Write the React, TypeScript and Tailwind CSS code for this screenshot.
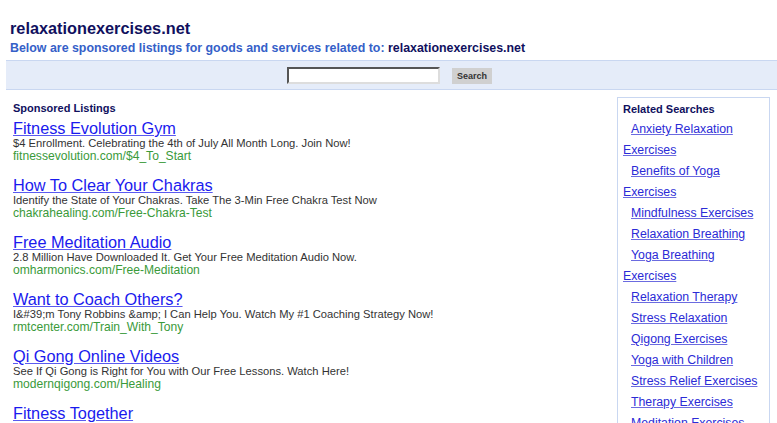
import React from "react";

const listings = [
  {
    t: "Fitness Evolution Gym",
    d: "$4 Enrollment. Celebrating the 4th of July All Month Long. Join Now!",
    u: "fitnessevolution.com/$4_To_Start",
  },
  {
    t: "How To Clear Your Chakras",
    d: "Identify the State of Your Chakras. Take The 3-Min Free Chakra Test Now",
    u: "chakrahealing.com/Free-Chakra-Test",
  },
  {
    t: "Free Meditation Audio",
    d: "2.8 Million Have Downloaded It. Get Your Free Meditation Audio Now.",
    u: "omharmonics.com/Free-Meditation",
  },
  {
    t: "Want to Coach Others?",
    d: "I&#39;m Tony Robbins &amp; I Can Help You. Watch My #1 Coaching Strategy Now!",
    u: "rmtcenter.com/Train_With_Tony",
  },
  {
    t: "Qi Gong Online Videos",
    d: "See If Qi Gong is Right for You with Our Free Lessons. Watch Here!",
    u: "modernqigong.com/Healing",
  },
  {
    t: "Fitness Together",
    d: "Personal Training in a Private Suite. Get Results Fast. Free Session!",
    u: "fitnesstogether.com",
  },
];

const related = [
  "Anxiety Relaxation Exercises",
  "Benefits of Yoga Exercises",
  "Mindfulness Exercises",
  "Relaxation Breathing",
  "Yoga Breathing Exercises",
  "Relaxation Therapy",
  "Stress Relaxation",
  "Qigong Exercises",
  "Yoga with Children",
  "Stress Relief Exercises",
  "Therapy Exercises",
  "Meditation Exercises",
];

export default function App() {
  return (
    <div className="h-[423px] w-[777px] overflow-hidden bg-white font-['Liberation_Sans',Arial,sans-serif]">
      <div className="pl-[10px] pt-[19px]">
        <h1 className="text-[16.3px] font-bold leading-[18px] text-[#10105e]">relaxationexercises.net</h1>
        <p className="mt-[4px] text-[12.4px] font-bold leading-[14px] text-[#3560c8]">
          Below are sponsored listings for goods and services related to:{" "}
          <span className="text-[#10105e]">relaxationexercises.net</span>
        </p>
      </div>
      <div className="ml-[6px] mt-[5px] flex h-[30px] items-center justify-center gap-[12px] border-y border-[#c9d7f1] bg-[#e5ecf9] pr-[4px]">
        <input
          type="text"
          className="h-[17px] w-[153px] border-2 border-t-[#555] border-l-[#555] border-b-[#ddd] border-r-[#ddd] bg-white outline-none"
        />
        <button className="mt-[2px] h-[16px] w-[40px] bg-[#d0d0d0] text-[9px] font-bold leading-[16px] text-[#333]">
          Search
        </button>
      </div>
      <div className="mt-[7px] flex">
        <div className="flex-1 pl-[13px] pt-[5px]">
          <div className="text-[11px] font-bold leading-[13px] text-[#10105e]">Sponsored Listings</div>
          <div className="mt-[4px]">
            {listings.map((l) => (
              <div key={l.t} className="mb-[13px]">
                <a className="block w-fit text-[16.3px] leading-[18px] text-[#1a1aee] underline decoration-[#5a5af0] underline-offset-[1px]">
                  {l.t}
                </a>
                <div className="text-[11.2px] leading-[13px] text-[#333]">{l.d}</div>
                <div className="text-[12.1px] leading-[13px] text-[#3a9a3a]">{l.u}</div>
              </div>
            ))}
          </div>
        </div>
        <div className="mr-[7px] h-[340px] w-[153px] border border-[#c9d7f1] pl-[5px] pr-[4px] pt-[5px]">
          <div className="text-[11px] font-bold leading-[13px] text-[#10105e]">Related Searches</div>
          <div className="mt-[3px]">
            {related.map((r) => (
              <div key={r} className="indent-[8px] text-[12.3px] leading-[21px]">
                <a className="text-[#2b2bd6] underline decoration-[#6b6be0]">{r}</a>
              </div>
            ))}
          </div>
        </div>
      </div>
    </div>
  );
}
